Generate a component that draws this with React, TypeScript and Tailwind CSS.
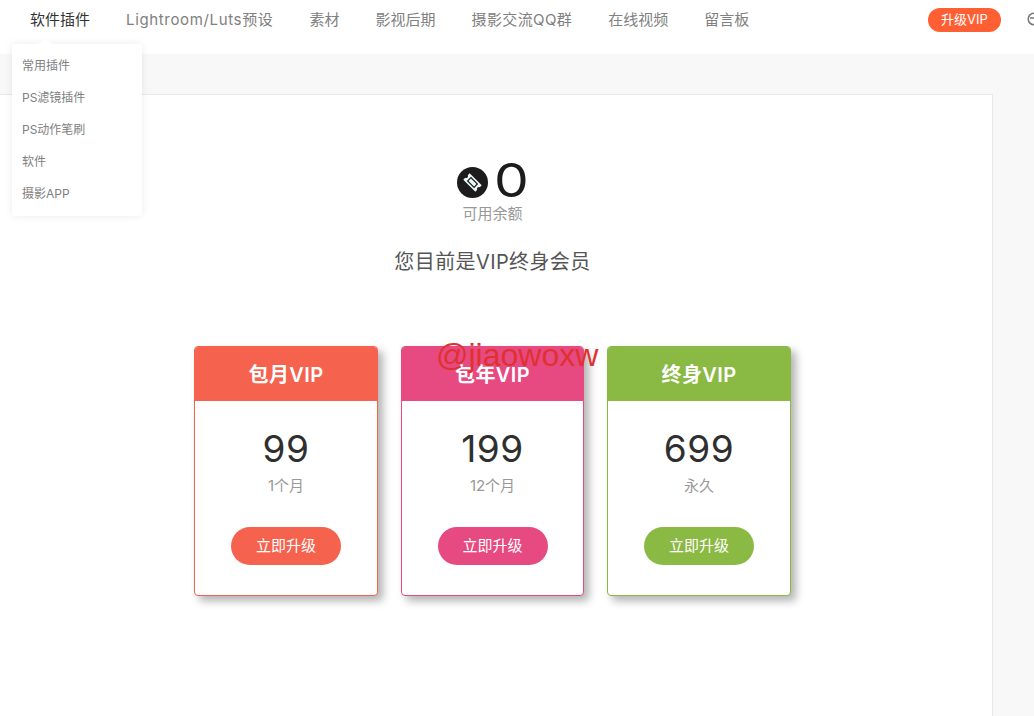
const navItems = [
    { label: '软件插件', cls: 'text-[#333]' },
    { label: 'Lightroom/Luts预设', cls: 'tracking-[0.65px]' },
    { label: '素材', cls: '' },
    { label: '影视后期', cls: '' },
    { label: '摄影交流QQ群', cls: 'tracking-[0.4px]' },
    { label: '在线视频', cls: '' },
    { label: '留言板', cls: '' },
];
const menuItems = ['常用插件', 'PS滤镜插件', 'PS动作笔刷', '软件', '摄影APP'];

const plans = [
    { name: '包月VIP', price: '99', period: '1个月', border: 'border-[#f5634f]', head: 'bg-[#f5634f]' },
    { name: '包年VIP', price: '199', period: '12个月', border: 'border-[#e74a80]', head: 'bg-[#e74a80]' },
    { name: '终身VIP', price: '699', period: '永久', border: 'border-[#8ab944]', head: 'bg-[#8ab944]' },
];

function TicketIcon() {
    return (
        <svg width="31" height="31" viewBox="0 0 31 31" className="mt-[4px]">
            <circle cx="15.5" cy="15.5" r="15.5" fill="#1c1c1c" />
            <g transform="rotate(45 15.5 15.5)">
                <path d="M7 11h17v2.6a2 2 0 0 0 0 3.8V20H7v-2.6a2 2 0 0 0 0-3.8z" fill="#eef7f7" />
                <rect x="11" y="13.2" width="9" height="4.6" fill="none" stroke="#1c1c1c" strokeWidth="1.2" />
            </g>
        </svg>
    );
}

export default function App() {
    return (
        <div className="relative h-[716px] w-[1034px] overflow-hidden bg-[#f8f8f8] font-['Inter','Noto_Sans_CJK_SC',sans-serif]">
            <header className="flex h-[54px] items-start bg-white">
                <nav className="ml-[30px] flex h-[40px] flex-1 items-center gap-[36px] text-[15px] text-[#808080]">
                    {navItems.map((item) => (
                        <a key={item.label} className={item.cls}>{item.label}</a>
                    ))}
                </nav>
                <button className="mt-[8px] h-[24px] w-[73px] shrink-0 rounded-full bg-[#ff5f33] text-[13px] text-white">升级VIP</button>
                <svg width="14" height="14" viewBox="0 0 14 14" className="ml-[26px] mr-[-7px] mt-[12px] shrink-0" fill="none" stroke="#777" strokeWidth="1.5">
                    <circle cx="7" cy="7" r="5.8" />
                    <path d="M3 6h8" />
                </svg>
            </header>

            {/* dropdown */}
            <div className="absolute left-[12px] top-[44px] w-[130px] rounded-[3px] bg-white py-[6px] shadow-[0_0_8px_rgba(0,0,0,0.08)]">
                <div className="absolute left-[26px] top-[-5px] h-0 w-0 border-x-[7px] border-b-[5px] border-x-transparent border-b-white" />
                {menuItems.map((item) => (
                    <div key={item} className="flex h-[32px] items-center pl-[10px] text-[12px] text-[#808080]">{item}</div>
                ))}
            </div>

            <main className="mt-[40px] h-[622px] w-[993px] border-r border-t border-[#e8e8e8] bg-white pr-[7px]">
                <div className="flex flex-col items-center pt-[60px]">
                    <div className="flex h-[50px] items-center gap-[9px] pr-[2px]">
                        <TicketIcon />
                        <span className="inline-block scale-x-[1.2] text-[46px] leading-none text-[#1c1c1c]">0</span>
                    </div>
                    <p className="mt-[-1px] text-[15px] leading-[20px] text-[#999]">可用余额</p>
                    <p className="mt-[24px] text-[20px] leading-[28px] tracking-[0.4px] text-[#555]">您目前是VIP终身会员</p>
                </div>

                <div className="mt-[70px] flex justify-center gap-[23px]">
                    {plans.map((plan) => (
                        <div key={plan.name} className={`h-[250px] w-[183.5px] overflow-hidden rounded-[4px] border bg-white text-center shadow-[5px_5px_8px_rgba(0,0,0,0.3)] ${plan.border}`}>
                            <div className={`flex h-[54px] items-center justify-center pt-[1px] text-[20px] font-semibold tracking-[0.4px] text-white ${plan.head}`}>{plan.name}</div>
                            <div className="mt-[25px] text-[37px] leading-[46px] tracking-[0.5px] text-[#2f2f2f]">{plan.price}</div>
                            <div className="mt-[4px] text-[15px] leading-[20px] text-[#999]">{plan.period}</div>
                            <button className={`mt-[31px] h-[38px] w-[110px] rounded-full text-[15px] text-white ${plan.head}`}>立即升级</button>
                        </div>
                    ))}
                </div>
            </main>

            {/* watermark */}
            <div className="absolute left-[436px] top-[336px] font-['Liberation_Sans',sans-serif] text-[32px] leading-[38px] text-[#e03131]">@jiaowoxw</div>
        </div>
    );
}
